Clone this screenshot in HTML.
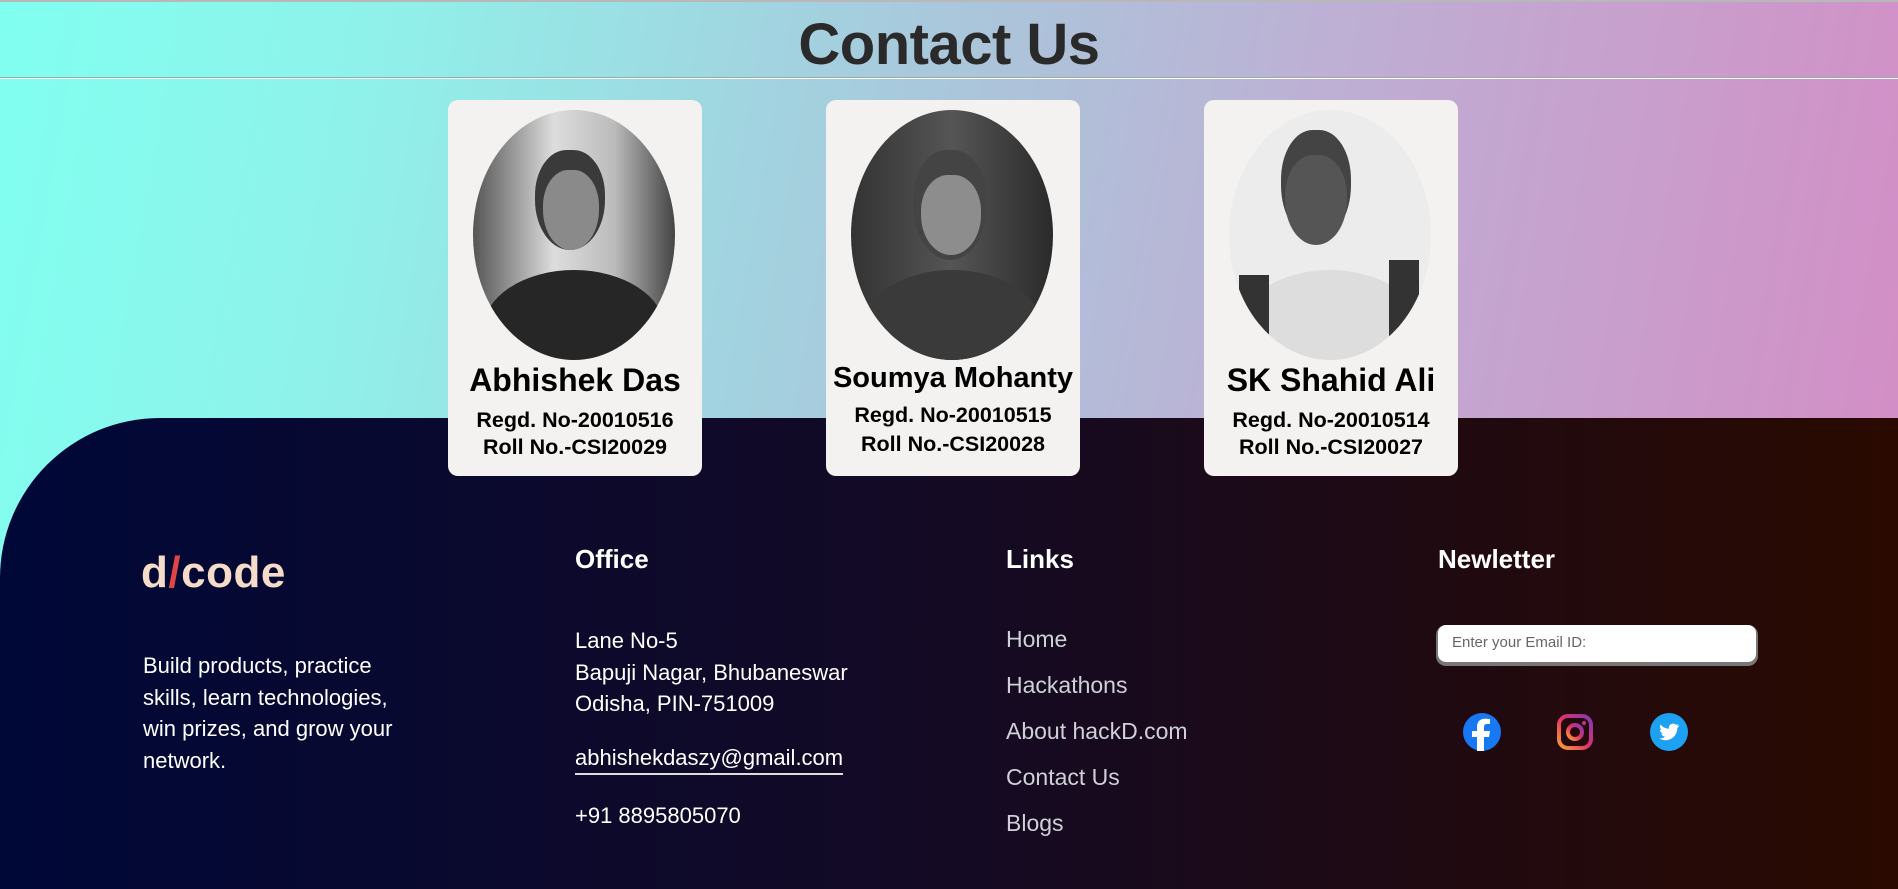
<!DOCTYPE html>
<html><head><meta charset="utf-8"><style>
*{margin:0;padding:0;box-sizing:border-box}
body{width:1898px;height:889px;overflow:hidden;position:relative;font-family:"Liberation Sans",sans-serif;background:linear-gradient(100deg,#80fff0 0%,#8ff2ea 18%,#a8c9dc 45%,#bdb0d4 65%,#d58ac4 100%)}
.top{position:absolute;left:0;top:0;width:1898px;height:2px;background:#b8b8b8}
h1{position:absolute;left:0;width:1898px;top:11px;text-align:center;font-size:58px;font-weight:bold;color:#2a2a2a;letter-spacing:-0.5px}
.hr{position:absolute;left:0;top:77px;width:1898px;height:2px;background:#9aa;border-bottom:1px solid #fff}
.foot{position:absolute;left:0;top:418px;width:1898px;height:471px;background:linear-gradient(90deg,#000838 0%,#140a24 50%,#2a0a00 100%);border-top-left-radius:160px 160px}
.card{position:absolute;top:100px;width:254px;height:376px;background:#f3f2f0;border-radius:10px;text-align:center;color:#000;overflow:hidden}
.ph{position:absolute;left:25px;top:10px;width:202px;height:250px;border-radius:50%;overflow:hidden}
.head{position:absolute;border-radius:45% 45% 50% 50%}
.body{position:absolute;left:10px;width:182px;top:160px;height:120px;border-radius:50% 50% 0 0}
.nm{position:absolute;left:0;width:100%;font-weight:bold;white-space:nowrap}
.rg{position:absolute;left:0;width:100%;font-weight:bold;font-size:21.5px;white-space:nowrap}
.t{position:absolute;color:#fff;font-size:22px;white-space:nowrap}
.h{position:absolute;color:#fff;font-size:26px;font-weight:bold}
.l{position:absolute;color:#d0d0d8;font-size:23px}
</style></head><body>
<div class="top"></div>
<h1>Contact Us</h1>
<div class="hr"></div>
<div class="foot"></div>

<div class="card" style="left:448px">
 <div class="ph" style="background:linear-gradient(90deg,#555 0%,#ddd 40%,#bbb 70%,#444 100%)">
  <div class="head" style="left:62px;top:40px;width:70px;height:100px;background:#3a3a3a"></div>
  <div class="head" style="left:70px;top:60px;width:56px;height:80px;background:#8a8a8a"></div>
  <div class="body" style="background:#262626"></div>
 </div>
 <div class="nm" style="top:262px;font-size:32px">Abhishek Das</div>
 <div class="rg" style="top:308px">Regd. No-20010516</div>
 <div class="rg" style="top:335px">Roll No.-CSI20029</div>
</div>

<div class="card" style="left:826px">
 <div class="ph" style="background:linear-gradient(90deg,#333 0%,#555 50%,#2a2a2a 100%)">
  <div class="head" style="left:62px;top:40px;width:74px;height:110px;background:#444"></div>
  <div class="head" style="left:70px;top:65px;width:60px;height:80px;background:#8d8d8d"></div>
  <div class="body" style="background:#3a3a3a"></div>
 </div>
 <div class="nm" style="top:262px;font-size:29px">Soumya Mohanty</div>
 <div class="rg" style="top:303px">Regd. No-20010515</div>
 <div class="rg" style="top:332px">Roll No.-CSI20028</div>
</div>

<div class="card" style="left:1204px">
 <div class="ph" style="background:#ececec">
  <div class="head" style="left:52px;top:20px;width:70px;height:110px;background:#444"></div>
  <div class="head" style="left:56px;top:45px;width:62px;height:90px;background:#555"></div>
  <div class="body" style="background:#ddd"></div>
  <div style="position:absolute;left:10px;top:165px;width:30px;height:80px;background:#333"></div>
  <div style="position:absolute;left:160px;top:150px;width:30px;height:80px;background:#333"></div>
 </div>
 <div class="nm" style="top:262px;font-size:32px">SK Shahid Ali</div>
 <div class="rg" style="top:308px">Regd. No-20010514</div>
 <div class="rg" style="top:335px">Roll No.-CSI20027</div>
</div>

<div style="position:absolute;left:141px;top:548px;font-size:44px;font-weight:bold;color:#f5dcc8;letter-spacing:0.5px">d<span style="color:#e04545">/</span>code</div>
<div class="t" style="left:143px;top:650px;line-height:31.5px;white-space:normal;width:275px">Build products, practice skills, learn technologies, win prizes, and grow your network.</div>

<div class="h" style="left:575px;top:544px">Office</div>
<div class="t" style="left:575px;top:625px;line-height:31.5px">Lane No-5<br>Bapuji Nagar, Bhubaneswar<br>Odisha, PIN-751009</div>
<div class="t" style="left:575px;top:745px;border-bottom:2px solid #ddd;padding-bottom:2px">abhishekdaszy@gmail.com</div>
<div class="t" style="left:575px;top:803px">+91 8895805070</div>

<div class="h" style="left:1006px;top:544px">Links</div>
<div class="l" style="left:1006px;top:626px">Home</div>
<div class="l" style="left:1006px;top:672px">Hackathons</div>
<div class="l" style="left:1006px;top:718px">About hackD.com</div>
<div class="l" style="left:1006px;top:764px">Contact Us</div>
<div class="l" style="left:1006px;top:810px">Blogs</div>

<div class="h" style="left:1438px;top:544px">Newletter</div>
<div style="position:absolute;left:1438px;top:625px;width:318px;height:37px;background:#fff;border-radius:8px;box-shadow:0 2px 0 2px #777;font-size:15px;color:#666;padding:9px 14px">Enter your Email ID:</div>

<svg style="position:absolute;left:1463px;top:713px" width="38" height="38" viewBox="0 0 38 38"><circle cx="19" cy="19" r="19" fill="#1877f2"/><path d="M21 38V24h5l1-6h-6v-4c0-2 1-3 3-3h3V6c-1 0-3-.3-5-.3-5 0-8 3-8 8v4.3h-5v6h5V38z" fill="#fff"/></svg>
<svg style="position:absolute;left:1556px;top:713px" width="38" height="38" viewBox="0 0 38 38"><defs><linearGradient id="ig" x1="0" y1="1" x2="1" y2="0"><stop offset="0" stop-color="#f9a030"/><stop offset=".5" stop-color="#e1306c"/><stop offset="1" stop-color="#833ab4"/></linearGradient></defs><rect x="3" y="3" width="32" height="32" rx="9" fill="none" stroke="url(#ig)" stroke-width="4"/><circle cx="19" cy="19" r="7" fill="none" stroke="url(#ig)" stroke-width="4"/><circle cx="28" cy="10" r="2" fill="#c13584"/></svg>
<svg style="position:absolute;left:1650px;top:713px" width="38" height="38" viewBox="0 0 38 38"><circle cx="19" cy="19" r="19" fill="#1da1f2"/><path d="M29 12.5c-.7.3-1.5.5-2.3.6.8-.5 1.4-1.3 1.7-2.2-.8.5-1.6.8-2.5 1-1.6-1.7-4.4-1.6-6 .1-.9 1-1.3 2.4-1 3.8-3.3-.2-6.3-1.7-8.4-4.3-1.1 1.9-.5 4.3 1.3 5.5-.7 0-1.3-.2-1.9-.5 0 2 1.4 3.7 3.3 4.1-.6.2-1.3.2-1.9.1.5 1.7 2.1 2.9 3.9 2.900-1.7 1.3-3.8 2-6 1.8 1.9 1.2 4.1 1.8 6.3 1.8 7.6 0 11.8-6.3 11.8-11.8v-.5c.8-.6 1.5-1.3 2-2.1z" fill="#fff"/></svg>
</body></html>
